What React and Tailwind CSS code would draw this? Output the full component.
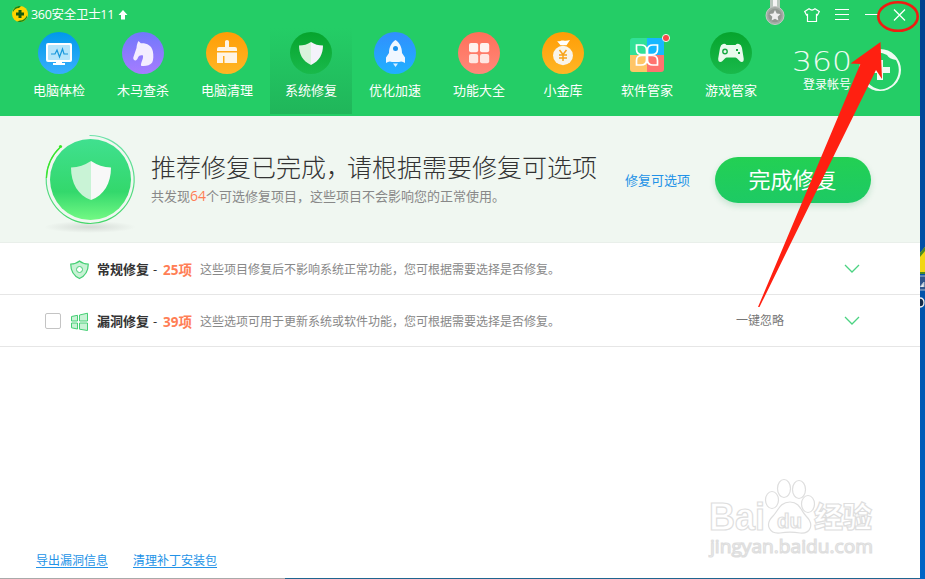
import { useState } from 'react';

const tabs = [
  { id: 'check', label: '电脑体检', icon: CheckIcon },
  { id: 'trojan', label: '木马查杀', icon: HorseIcon },
  { id: 'clean', label: '电脑清理', icon: BrushIcon },
  { id: 'repair', label: '系统修复', icon: ShieldIcon },
  { id: 'speed', label: '优化加速', icon: RocketIcon },
  { id: 'tools', label: '功能大全', icon: GridIcon },
  { id: 'bank', label: '小金库', icon: MoneyIcon },
  { id: 'soft', label: '软件管家', icon: SoftIcon },
  { id: 'game', label: '游戏管家', icon: GameIcon },
];

function Disc({ id, from, to, children }) {
  return (
    <svg width="42" height="42" viewBox="0 0 42 42">
      <defs>
        <linearGradient id={id} x1="0" y1="0" x2="0" y2="1">
          <stop offset="0" stopColor={from} />
          <stop offset="1" stopColor={to} />
        </linearGradient>
      </defs>
      <circle cx="21" cy="21" r="21" fill={`url(#${id})`} />
      {children}
    </svg>
  );
}

function CheckIcon() {
  return (
    <Disc id="d-check" from="#0099e9" to="#39aefd">
      <rect x="8" y="11" width="26" height="19" rx="2" fill="#fff" />
      <rect x="10" y="13" width="22" height="15" rx="1" fill="#b5e5fa" />
      <path d="M18 30h6v1h3v2H15v-2h3z" fill="#fff" />
      <path d="M13 22h4l2-4 2.500 7 3-8 1.500 5h4" fill="none" stroke="#1898dc" strokeWidth="1.200" />
    </Disc>
  );
}

function HorseIcon() {
  return (
    <Disc id="d-horse" from="#7178fb" to="#a67cff">
      <path
        d="M16.500 9l2.300 2.300C25 11 29.500 13.500 30.800 19c.9 4.500.7 9-.6 11.500-2 3-7.500 4.200-11.200 3.300-.3-3.500 2.500-6.500 2-10.300-2.300-.7-4 0-5 2-.7 1.700-1.500 3.300-3 3-1.300-.4-2-1.700-1.700-3L14.500 16c.2-2.800.8-5 2-7z"
        fill="#f4edff"
      />
    </Disc>
  );
}

function BrushIcon() {
  return (
    <Disc id="d-brush" from="#ff9d06" to="#ffb625">
      <path d="M19 9.500q0-1.500 2-1.500t2 1.500V15h6q2 0 2 2v2H11v-2q0-2 2-2h6z" fill="#fff4e4" />
      <path d="M11 20.500h20V31H18.500v-7H17v7h-6z" fill="#fff4e4" />
    </Disc>
  );
}

function ShieldIcon() {
  return (
    <Disc id="d-shield" from="#06a42d" to="#19b94b">
      <path d="M21 10c-3.500 2.500-7.500 3.500-12 3.500C9 22 12.500 29 21 33z" fill="#d9f3dc" />
      <path d="M21 10c3.500 2.500 7.500 3.500 12 3.500C33 22 29.500 29 21 33z" fill="#f4f2fa" />
    </Disc>
  );
}

function RocketIcon() {
  return (
    <Disc id="d-rocket" from="#318ffe" to="#20b0ff">
      <path
        d="M21.500 8c-4 2.500-6.500 7-6.500 13l-3 4.500V31c2-1.500 4-2 6-1h7c2-1 4-.5 6 1v-5.500L28 21c0-6-2.500-10.500-6.500-13z"
        fill="#f0f7ff"
      />
      <circle cx="21.500" cy="16.500" r="2.500" fill="#1b92ed" />
      <path d="M19 31.500h5L21.500 35z" fill="#d5eeff" />
    </Disc>
  );
}

function GridIcon() {
  return (
    <Disc id="d-grid" from="#ff7059" to="#ff887a">
      <rect x="11" y="11" width="9.200" height="9.200" rx="2" fill="#fff2ef" />
      <rect x="22" y="11" width="9.200" height="9.200" rx="2" fill="#fff2ef" />
      <rect x="11" y="22" width="9.200" height="9.200" rx="2" fill="#ffe7e2" />
      <rect x="22" y="22" width="9.200" height="9.200" rx="2" fill="#ffe7e2" />
    </Disc>
  );
}

function MoneyIcon() {
  return (
    <Disc id="d-money" from="#ff9d06" to="#ffb625">
      <path d="M15 9c2.500.8 4-1 6.500-.5 2 .5 4 .3 6.500-.5l-3.500 5.300h-6z" fill="#fff" />
      <ellipse cx="21" cy="23.500" rx="10" ry="9.700" fill="#f9f4e9" />
      <path d="M17.500 18l3.500 4.500 3.500-4.500M21 22.500V29M17 23h8M17 26h8" fill="none" stroke="#f8a31a" strokeWidth="1.500" />
    </Disc>
  );
}

function SoftIcon() {
  return (
    <svg width="42" height="42" viewBox="0 0 42 42" className="overflow-visible">
      <path d="M7 6h14v17H4V9q0-3 3-3z" fill="#31e096" />
      <path d="M21 6h14q3 0 3 3v14H21z" fill="#16b7ff" />
      <path d="M4 23h17v17H7q-3 0-3-3z" fill="#ffc567" />
      <path d="M21 23h17v14q0 3-3 3H21z" fill="#ff7370" />
      <path
        d="M20.500 22.500H16c-4 0-5.500-2.500-5.500-5V13H15c4 0 5.500 2.500 5.500 5zM21.500 22.500H26c4 0 5.500-2.500 5.500-5V13H27c-4 0-5.500 2.500-5.500 5zM20.500 23.500H16c-4 0-5.500 2.500-5.500 5V33H15c4 0 5.500-2.500 5.500-5zM21.500 23.500H26c4 0 5.500 2.500 5.500 5V33H27c-4 0-5.500-2.500-5.500-5z"
        fill="none"
        stroke="#fff"
        strokeWidth="1.700"
      />
      <circle cx="40" cy="6" r="3.600" fill="#fb4848" stroke="#e8fbe9" strokeWidth="1" />
    </svg>
  );
}

function GameIcon() {
  return (
    <Disc id="d-game" from="#06a42d" to="#19b94b">
      <path
        d="M13 12q2-1 3.500 1h9q1.500-2 3.500-1 2.300.7 3 4l1.700 10.500q.3 3.500-2 3.500c-2.500 0-4-4.500-6.500-4.500h-8.500C14.500 25.500 13 30 10.500 30Q8 30 8.200 26.500L10 16q.7-3.300 3-4z"
        fill="#e9faed"
      />
      <circle cx="15" cy="19.500" r="2.200" fill="none" stroke="#17a943" strokeWidth="1.400" />
      <path d="M26 17h2v2h-2zM28 20h2v2h-2z" fill="#17a943" />
    </Disc>
  );
}

function TitleBar() {
  return (
    <div className="flex h-7 items-center">
      <svg width="16" height="16" viewBox="0 0 16 16" className="ml-3">
        <circle cx="8" cy="8" r="8" fill="#ffd400" />
        <path d="M1 4.500A8 8 0 0 1 9 0L7 2C4 2 2 4 1 6z" fill="#16861a" />
        <path d="M15 11.500A8 8 0 0 1 5 15.500l3-1c3 0 5-1.500 7-5z" fill="#16861a" />
        <path d="M6.500 4h3v2.500H12v3H9.500V12h-3V9.500H4v-3h2.500z" fill="#155c11" />
      </svg>
      <span className="ml-[3px] mt-[2px] w-[83px] whitespace-nowrap text-[12.500px] tracking-[-0.3px]">360安全卫士11</span>
      <svg width="10" height="10" viewBox="0 0 10 10" className="ml-[4px] mt-px">
        <path d="M5 0l4.500 5H7v4.500H3V5H.5z" fill="#fff" />
      </svg>
      <div className="ml-auto mr-[13px] flex items-center text-white">
        <svg width="20" height="28" viewBox="0 0 20 28" className="mr-[19px]">
          <path d="M5 0h3v8H5zM12 0h3v8h-3z" fill="#b9c7be" />
          <path d="M8 0h4v8H8z" fill="#f4f4f4" />
          <circle cx="10" cy="15.500" r="9" fill="#a3aaa5" stroke="#c6c8c6" />
          <circle cx="10" cy="15.500" r="6.800" fill="#929792" />
          <path d="M10 10l1.700 3.500 3.800.5-2.800 2.700.7 3.800-3.400-1.800-3.400 1.800.7-3.800L4.500 14l3.800-.5z" fill="#eee" />
        </svg>
        <svg width="16" height="14" viewBox="0 0 16 14" fill="none" stroke="currentColor" className="mr-[15px] mt-px">
          <path d="M5 .8q3 2.500 6 0l4.300 2.700L13.500 7l-1-.5v7h-9v-7l-1 .5L.7 3.500z" strokeWidth="1.200" />
        </svg>
        <svg width="14" height="12" viewBox="0 0 14 12" stroke="currentColor" className="mr-4 mt-[2px]">
          <path d="M0 .5h14M0 5.500h14M0 10.500h14" />
        </svg>
        <svg width="13" height="12" viewBox="0 0 13 12" stroke="currentColor" className="mr-[15px]">
          <path d="M0 6.500h13" />
        </svg>
        <svg width="13" height="12" viewBox="0 0 13 12" stroke="currentColor" className="mr-px mt-[2px]">
          <path d="M1 .5l11 11M12 .5l-11 11" strokeWidth="1.300" />
        </svg>
      </div>
    </div>
  );
}

function Account() {
  return (
    <div className="flex flex-1 items-start">
      <div className="ml-[18px] mt-[15px] flex w-16 flex-col">
        <svg width="64" height="32" viewBox="0 0 64 32" className="overflow-visible">
          <text
            x="1"
            y="28"
            fill="#eefbf2"
            textLength="60"
            lengthAdjust="spacingAndGlyphs"
            className="font-['DejaVu_Sans',sans-serif] text-[27px] font-extralight"
          >
            360
          </text>
        </svg>
        <span className="ml-[12px] whitespace-nowrap text-xs leading-5">登录帐号</span>
      </div>
      <svg width="44" height="44" viewBox="0 0 44 44" className="ml-[3px] mt-5">
        <path
          fillRule="evenodd"
          d="M22 1a21 21 0 1 1 0 42a21 21 0 1 1 0-42zM19 4.500A18 18 0 0 0 10 35Q15 40 22 41.500A19.500 19.500 0 0 0 38 12Q31 11 29 7 24 4 19 4.500z"
          fill="#effbf2"
        />
        <path d="M19 12h6v7h7v6h-7v7h-6v-7h-7v-6h7z" fill="#effbf2" />
      </svg>
    </div>
  );
}

function Hero() {
  return (
    <section className="flex h-[127px] border-b border-[#e9efea] bg-[#f0f7f1]">
      <svg width="110" height="120" viewBox="0 0 110 120" className="ml-9 shrink-0">
        <defs>
          <linearGradient id="badge" x1="0" y1="0" x2="0" y2="1">
            <stop offset="0" stopColor="#40e08f" />
            <stop offset="0.65" stopColor="#33d86c" />
            <stop offset="1" stopColor="#73f984" />
          </linearGradient>
          <linearGradient id="ring" x1="0" y1="0" x2="0" y2="1">
            <stop offset="0" stopColor="#6ee2aa" />
            <stop offset="1" stopColor="#45d76a" />
          </linearGradient>
          <radialGradient id="floor">
            <stop offset="0" stopColor="#d5dbd6" />
            <stop offset="1" stopColor="#f0f7f1" />
          </radialGradient>
        </defs>
        <ellipse cx="54" cy="111" rx="46" ry="6" fill="url(#floor)" />
        <circle cx="54.500" cy="63.500" r="43.500" fill="#f0f7f1" />
        <path d="M53.500 19.500A44 44 0 1 1 24.500 31" fill="none" stroke="url(#ring)" strokeWidth="1.200" />
        <path d="M10.500 62A44 44 0 0 1 24.500 31" fill="none" stroke="#3be629" strokeWidth="1.200" />
        <circle cx="24.500" cy="30.500" r="1.600" fill="#3be629" />
        <circle cx="54.500" cy="63.500" r="40.500" fill="url(#badge)" />
        <path d="M55 45q-9 6-20 6.500C35 67 42 79.500 55 84z" fill="#c9f3d6" />
        <path d="M55 45q9 6 20 6.500C75 67 68 79.500 55 84z" fill="#f8f8f8" />
      </svg>
      <div className="ml-[5px] mt-[33px] w-[460px] whitespace-nowrap">
        <h1 className="text-[25px] font-light leading-9 text-[#333]">
          推荐修复已完成<span className="tracking-[-4px]">，</span>请根据需要修复可选项
        </h1>
        <p className="text-[13px] leading-[22px] text-[#888]">
          共发现<span className="text-sm leading-none text-[#ff7e55]">64</span>个可选修复项目，这些项目不会影响您的正常使用。
        </p>
      </div>
      <a className="ml-[14px] mt-[54px] text-[13px] leading-5 text-[#2292e7]">修复可选项</a>
      <button className="ml-[25px] mt-[41px] h-[46px] w-[156px] rounded-full bg-linear-to-b from-[#23d053] to-[#1dca64] pr-px pb-px text-[22px] text-white shadow-[0_3px_6px_rgba(30,150,80,0.2)]">
        完成修复
      </button>
    </section>
  );
}

function Chevron() {
  return (
    <svg width="16" height="10" viewBox="0 0 16 10" fill="none" stroke="#4bd382" strokeWidth="1.300">
      <path d="M1 1l7 7 7-7" />
    </svg>
  );
}

function RepairRow({ icon, title, count, desc, checkbox, action }) {
  const [checked, setChecked] = useState(false);

  return (
    <div className="flex h-[52px] items-center border-b border-[#e6e6e6] whitespace-nowrap">
      <div className="ml-[45px] flex w-6">
        {checkbox && (
          <input
            type="checkbox"
            checked={checked}
            onChange={() => setChecked(!checked)}
            className="size-4 appearance-none rounded-xs border border-[#c4c4c4] bg-white"
          />
        )}
      </div>
      <div className="w-7 pt-[2px]">{icon}</div>
      <div className="flex items-center pt-[3px]">
        <span className="text-[13px] font-bold text-[#333]">{title}</span>
        <span className="mx-[4px] w-1.5 text-[13px] text-[#333]">-</span>
        <span className="w-[37px] text-[13.500px] font-bold text-[#ff7e55]">{count}项</span>
        <span className="text-xs text-[#888]">{desc}</span>
      </div>
      <div className="ml-auto mr-[60px] flex items-center gap-[60px] text-xs text-[#777]">
        {action && <span>{action}</span>}
        <Chevron />
      </div>
    </div>
  );
}

function Watermark() {
  return (
    <svg width="170" height="84" viewBox="0 0 170 84" fill="#fff" stroke="#dedede" strokeWidth="1.200">
      <text x="1" y="52" textLength="56" lengthAdjust="spacingAndGlyphs" className="font-['Liberation_Sans',sans-serif] text-[38px] font-bold">
        Bai
      </text>
      <ellipse cx="64" cy="22" rx="6.500" ry="8.500" />
      <ellipse cx="76" cy="10.500" rx="6.500" ry="9" />
      <ellipse cx="91" cy="11.500" rx="6.500" ry="9" />
      <ellipse cx="100" cy="26" rx="6.500" ry="8.500" />
      <path d="M82 24c10 0 11 9 16 14 9 9 4 18-6 17-6-1-14-1-20 0-10 1-16-8-7-17 5-5 7-14 17-14z" />
      <text x="69" y="50" textLength="25" lengthAdjust="spacingAndGlyphs" className="font-['Liberation_Sans',sans-serif] text-[20px] font-bold">
        du
      </text>
      <text x="106" y="50" textLength="58" className="font-['Noto_Sans_CJK_SC',sans-serif] text-[29px] font-black">
        经验
      </text>
      <text x="2" y="75" textLength="163" lengthAdjust="spacingAndGlyphs" className="font-['Open_Sans',sans-serif] text-[18px]">
        jingyan.baidu.com
      </text>
    </svg>
  );
}

export default function App() {
  const [active, setActive] = useState('repair');

  return (
    <div className="relative flex h-[579px] w-[925px] overflow-hidden bg-linear-to-b from-[#00418e] to-[#0065c6] font-['Open_Sans','Noto_Sans_CJK_SC',sans-serif]">
      <div className="flex h-[578px] w-[920px] flex-col bg-white">
        <header className="h-[116px] bg-[#24cd66] text-white">
          <TitleBar />
          <div className="flex h-[86px] pl-[17px]">
            {tabs.map(({ id, label, icon: Icon }) => (
              <button
                key={id}
                onClick={() => setActive(id)}
                className={`mx-px flex w-[82px] flex-col items-center pt-1 text-[13px] ${
                  active === id ? 'bg-linear-to-b from-[#24cd66] to-[#20b65a]' : ''
                }`}
              >
                <Icon />
                <span className="mt-[5px] leading-[22px]">{label}</span>
              </button>
            ))}
            <Account />
          </div>
        </header>

        <Hero />

        <RepairRow
          title="常规修复"
          count={25}
          desc="这些项目修复后不影响系统正常功能，您可根据需要选择是否修复。"
          icon={
            <svg width="20" height="20" viewBox="0 0 20 20" fill="#c8f2d5" stroke="#45cf74" className="ml-px">
              <path d="M9.500 1Q6 4 .8 4 .5 14 9.500 18.500 18.500 14 18.200 4 13 4 9.500 1z" strokeWidth="1.200" />
              <circle cx="9.500" cy="9.500" r="3" fill="#fff" />
            </svg>
          }
        />
        <RepairRow
          title="漏洞修复"
          count={39}
          desc="这些选项可用于更新系统或软件功能，您可根据需要选择是否修复。"
          checkbox
          action="一键忽略"
          icon={
            <svg width="20" height="20" viewBox="0 0 20 20" fill="#c8f2d5" stroke="#45cf74" className="ml-px">
              <path d="M1.500 4.500l6-1.200V9h-6zM9.500 3l8-1.800V9h-8zM1.500 11h6v6l-6-1.200zM9.500 11h8v7.500l-8-1.300z" />
            </svg>
          }
        />

        <footer className="mt-auto flex items-end justify-between pr-[42px] pl-9">
          <div className="mb-[7px] flex gap-[25px] text-xs leading-5 text-[#2292e7]">
            <a className="underline underline-offset-2">导出漏洞信息</a>
            <a className="underline underline-offset-2">清理补丁安装包</a>
          </div>
          <div className="mb-[16px]">
            <Watermark />
          </div>
        </footer>
      </div>

      {/* desktop behind the window */}
      <svg width="5" height="65" viewBox="0 0 5 65" className="mt-[246px] shrink-0">
        <path d="M0 7l5-6v27H0z" fill="#f2d713" />
        <path d="M0 7l5-6v4L0 11zM0 26h5v2H0z" fill="#4c8b24" />
        <path d="M0 30h5v14H0z" fill="#30568d" />
        <path d="M0 30h5M0 44h5M0 41l4-5v5" fill="#e5e9ec" stroke="#aebdce" />
        <path d="M0 52q4 0 4 4.500T0 61" fill="#142c49" stroke="#eee" strokeWidth="1.300" />
      </svg>
      <div className="absolute bottom-0 left-0 flex h-px w-[920px]">
        <div className="w-[285px] bg-[#aaa]" />
        <div className="flex-1 bg-[#20658f]" />
      </div>

      <svg width="925" height="579" viewBox="0 0 925 579" className="pointer-events-none absolute inset-0">
        <path d="M880.500 42L850.500 63.500 860.300 64 758 307h1.500L876 70l6 9z" fill="#ff2011" />
        <ellipse cx="898" cy="16.500" rx="19.700" ry="14.300" fill="none" stroke="#ef1d12" strokeWidth="2.600" />
      </svg>
    </div>
  );
}
